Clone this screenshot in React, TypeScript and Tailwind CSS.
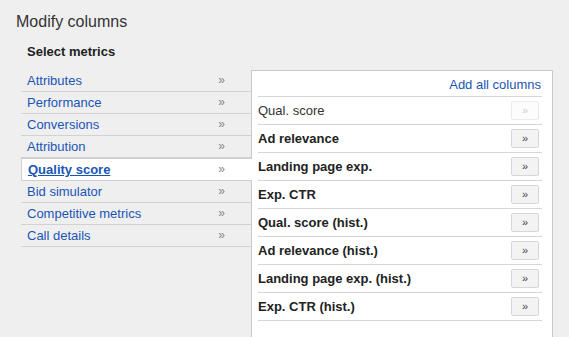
import React from "react";

const categories = [
  "Attributes",
  "Performance",
  "Conversions",
  "Attribution",
  "Quality score",
  "Bid simulator",
  "Competitive metrics",
  "Call details",
];

const metrics = [
  { label: "Qual. score", added: true },
  { label: "Ad relevance" },
  { label: "Landing page exp." },
  { label: "Exp. CTR" },
  { label: "Qual. score (hist.)" },
  { label: "Ad relevance (hist.)" },
  { label: "Landing page exp. (hist.)" },
  { label: "Exp. CTR (hist.)" },
];

function CategoryRow({ label, active }: { label: string; active: boolean }) {
  if (active) {
    return (
      <li className="relative z-10 -mr-px flex h-[23px] items-center justify-between border-y border-l border-[#cfcfcf] bg-white pl-[6px] pr-[27px]">
        <a className="font-bold text-[#1a55b5] underline">{label}</a>
        <span className="text-[12px] text-[#888]">»</span>
      </li>
    );
  }
  return (
    <li className="flex h-[22px] items-center justify-between border-b border-[#d2d2d2] pl-[6px] pr-[26px]">
      <a className="text-[#1a55b5]">{label}</a>
      <span className="text-[12px] text-[#888]">»</span>
    </li>
  );
}

function MetricRow({ label, added }: { label: string; added?: boolean }) {
  return (
    <li className="flex h-[28px] items-center justify-between border-b border-[#d6d6d6] pr-[3px]">
      <span className={added ? "text-[#333]" : "font-bold text-[#222]"}>{label}</span>
      <button
        className={
          added
            ? "flex h-[19px] w-[28px] items-center justify-center rounded-[2px] border border-[#ebebeb] bg-[#fcfcfc] text-[11px] text-[#ccc]"
            : "flex h-[19px] w-[28px] items-center justify-center rounded-[2px] border border-[#d6d6d6] bg-[#f3f3f3] text-[11px] text-[#444]"
        }
      >
        »
      </button>
    </li>
  );
}

export default function App() {
  return (
    <div className="h-[337px] w-[569px] overflow-hidden bg-[#efefef] font-['Liberation_Sans',Arial,sans-serif] text-[13px] leading-[15px]">
      <h1 className="pl-4 pt-[12px] text-[16px] leading-5 text-[#333]">Modify columns</h1>
      <h2 className="mt-[12px] pl-[27px] font-bold text-[#222]">Select metrics</h2>

      <div className="mt-[11px] flex pl-[21px]">
        <ul className="w-[230px]">
          {categories.map((c) => (
            <CategoryRow key={c} label={c} active={c === "Quality score"} />
          ))}
        </ul>

        <div className="h-[300px] w-[302px] border border-[#c8c8c8] bg-white pl-[6px] pr-[10px]">
          <div className="flex h-[26px] justify-end border-b border-[#d6d6d6] pr-[1px] pt-[6px]">
            <a className="text-[#1a55b5]">Add all columns</a>
          </div>
          <ul>
            {metrics.map((m) => (
              <MetricRow key={m.label} label={m.label} added={m.added} />
            ))}
          </ul>
        </div>
      </div>
    </div>
  );
}
